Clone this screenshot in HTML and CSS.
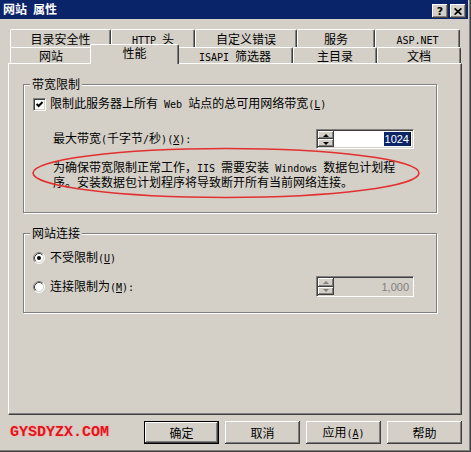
FILE: index.html
```html
<!DOCTYPE html>
<html lang="zh-CN">
<head>
    <meta charset="UTF-8">
    <title>网站 属性</title>
    <link rel="stylesheet" href="styles.css">
</head>
<body>
<div class="window">
    <!--标题栏-->
    <div class="titlebar">
        <span class="caption">网站<span class="en"> </span>属性</span>
        <span class="cap-btn">?</span>
        <span class="cap-btn">
            <svg width="8" height="7" viewBox="0 0 8 7"><path d="M0.6 0.4L7.4 6.6M7.4 0.4L0.6 6.6" stroke="#000" stroke-width="1.7"/></svg>
        </span>
    </div>

    <!--选项卡-->
    <div class="tabs">
        <div class="tab-row">
            <div class="tab w101">目录安全性</div>
            <div class="tab w84"><span class="en">HTTP </span>头</div>
            <div class="tab w102">自定义错误</div>
            <div class="tab w78">服务</div>
            <div class="tab w85"><span class="en">ASP.NET</span></div>
        </div>
        <div class="tab-row front">
            <div class="tab w82">网站</div>
            <div class="tab w89 current">性能</div>
            <div class="tab w116"><span class="en">ISAPI </span>筛选器</div>
            <div class="tab w84">主目录</div>
            <div class="tab w84">文档</div>
        </div>
    </div>

    <!--性能页-->
    <div class="panel">
        <div class="group bandwidth">
            <div class="legend">带宽限制</div>
            <div class="option">
                <span class="check">
                    <svg width="7" height="7" viewBox="0 0 7 7"><polyline points="0.6,3 2.6,5 6.6,1" fill="none" stroke="#000" stroke-width="2"/></svg>
                </span>
                <span>限制此服务器上所有<span class="en"> Web </span>站点的总可用网络带宽<span class="en">(<u>L</u>)</span></span>
            </div>
            <div class="field-row">
                <span>最大带宽<span class="en">(</span>千字节<span class="en">/</span>秒<span class="en">)(<u>X</u>):</span></span>
                <div class="spin">
                    <div class="spin-btns">
                        <span class="spin-btn up"></span>
                        <span class="spin-btn down"></span>
                    </div>
                    <div class="spin-field"><span class="sel">1024</span></div>
                </div>
            </div>
            <div class="note">
                <div>为确保带宽限制正常工作，<span class="en">IIS </span>需要安装<span class="en"> Windows </span>数据包计划程</div>
                <div>序。安装数据包计划程序将导致断开所有当前网络连接。</div>
            </div>
        </div>

        <div class="group connect">
            <div class="legend">网站连接</div>
            <div class="option radio-row">
                <svg class="radio" width="12" height="12" viewBox="0 0 12 12">
                    <circle cx="6" cy="6" r="5" fill="#fff"/>
                    <path d="M2.11 9.89A5.5 5.5 0 0 1 9.89 2.11" fill="none" stroke="#808080"/>
                    <path d="M9.89 2.11A5.5 5.5 0 0 1 2.11 9.89" fill="none" stroke="#fff"/>
                    <path d="M2.82 9.18A4.5 4.5 0 0 1 9.18 2.82" fill="none" stroke="#404040"/>
                    <path d="M9.18 2.82A4.5 4.5 0 0 1 2.82 9.18" fill="none" stroke="#d4d0c8"/>
                    <circle cx="6" cy="6" r="2" fill="#000"/>
                </svg>
                <span>不受限制<span class="en">(<u>U</u>)</span></span>
            </div>
            <div class="option radio-row limit">
                <svg class="radio" width="12" height="12" viewBox="0 0 12 12">
                    <circle cx="6" cy="6" r="5" fill="#fff"/>
                    <path d="M2.11 9.89A5.5 5.5 0 0 1 9.89 2.11" fill="none" stroke="#808080"/>
                    <path d="M9.89 2.11A5.5 5.5 0 0 1 2.11 9.89" fill="none" stroke="#fff"/>
                    <path d="M2.82 9.18A4.5 4.5 0 0 1 9.18 2.82" fill="none" stroke="#404040"/>
                    <path d="M9.18 2.82A4.5 4.5 0 0 1 2.82 9.18" fill="none" stroke="#d4d0c8"/>
                </svg>
                <span>连接限制为<span class="en">(<u>M</u>):</span></span>
                <div class="spin off">
                    <div class="spin-btns">
                        <span class="spin-btn up"></span>
                        <span class="spin-btn down"></span>
                    </div>
                    <div class="spin-field">1,000</div>
                </div>
            </div>
        </div>
    </div>

    <!--底部按钮-->
    <div class="footer">
        <span class="watermark">GYSDYZX.COM</span>
        <div class="buttons">
            <button class="btn default">确定</button>
            <button class="btn">取消</button>
            <button class="btn">应用<span class="en">(<u>A</u>)</span></button>
            <button class="btn">帮助</button>
        </div>
    </div>

    <!--红色圈注-->
    <svg class="mark" width="392" height="54" viewBox="0 0 392 54">
        <ellipse cx="196" cy="27" rx="193" ry="24.5" fill="none" stroke="#e3302f" stroke-width="1.6"/>
    </svg>
</div>
</body>
</html>
```

FILE: styles.css
```css
body{
    margin:0;
    font-family:"Noto Sans CJK SC","Noto Sans",sans-serif;
    font-size:12px;
    line-height:14px;
    color:#000;
    background:#d4d0c8;
}
.en{
    font-family:"DejaVu Sans Mono",monospace;
    font-size:10px;
    white-space:pre;
}
.window{
    position:relative;
    width:471px;
    height:452px;
    box-sizing:border-box;
    padding:0 2px 2px 0;
    border-right:1px solid #404040;
    border-bottom:1px solid #404040;
    box-shadow:inset -1px -1px #808080;
    background:#d4d0c8;
}

/*标题栏*/
.titlebar{
    display:flex;
    align-items:flex-end;
    height:19px;
    box-sizing:border-box;
    padding:0 2px 1px 3px;
    background:#0a246a;
    color:#fff;
}
.caption{
    flex:1;
    font-weight:bold;
}
.cap-btn{
    display:flex;
    align-items:center;
    justify-content:center;
    width:16px;
    height:14px;
    margin-left:2px;
    background:#d4d0c8;
    color:#000;
    font:bold 11px "DejaVu Sans",sans-serif;
    box-shadow:inset -1px -1px #404040, inset 1px 1px #fff, inset -2px -2px #808080;
}

/*选项卡*/
.tabs{
    margin:10px 0 0 10px;
}
.tab-row{
    display:flex;
}
.tab{
    box-sizing:border-box;
    height:18px;
    line-height:17px;
    text-align:center;
    white-space:nowrap;
    background:#d4d0c8;
    border-top:1px solid #fff;
    border-left:1px solid #fff;
    border-right:1px solid #404040;
    border-radius:2px 2px 0 0;
    box-shadow:inset -1px 0 #808080;
}
.front .tab{
    height:16px;
    line-height:15px;
}
.front .tab.current{
    position:relative;
    height:20px;
    margin:-3px -2px -1px;
}
.w78{width:78px;}
.w82{width:82px;}
.w84{width:84px;}
.w85{width:85px;}
.w89{width:89px;}
.w101{width:101px;}
.w102{width:102px;}
.w116{width:116px;}

/*内容面板*/
.panel{
    width:454px;
    height:352px;
    box-sizing:border-box;
    margin-left:8px;
    padding:20px 0 0 14px;
    border-top:1px solid #fff;
    border-left:1px solid #fff;
    border-right:1px solid #404040;
    border-bottom:1px solid #404040;
    box-shadow:inset -1px -1px #808080;
}
.group{
    width:414px;
    box-sizing:border-box;
    border:1px solid #808080;
    box-shadow:1px 1px #fff, inset 1px 1px #fff;
}
.bandwidth{
    height:129px;
}
.connect{
    height:80px;
    margin-top:20px;
}
.legend{
    width:fit-content;
    margin:-8px 0 0 6px;
    padding:0 2px;
    background:#d4d0c8;
}
.option{
    display:flex;
    align-items:center;
    gap:4px;
    height:14px;
    margin-top:6px;
    padding-left:9px;
    white-space:nowrap;
}
.radio-row{
    gap:5px;
    margin-top:11px;
}
.radio-row.limit{
    height:21px;
}
.check{
    display:flex;
    align-items:center;
    justify-content:center;
    width:13px;
    height:13px;
    box-sizing:border-box;
    border:1px solid;
    border-color:#808080 #fff #fff #808080;
    box-shadow:inset 1px 1px #404040, inset -1px -1px #d4d0c8;
    background:#fff;
}
.field-row{
    display:flex;
    align-items:center;
    margin-top:18px;
    padding-left:29px;
    white-space:nowrap;
}
.note{
    margin-top:11px;
    padding-left:29px;
    line-height:13px;
    white-space:nowrap;
}

/*微调框*/
.spin{
    display:flex;
    width:98px;
    height:20px;
    box-sizing:border-box;
    margin-left:auto;
    margin-right:22px;
    padding:1px;
    border:1px solid;
    border-color:#808080 #fff #fff #808080;
    box-shadow:inset 1px 1px #404040, inset -1px -1px #d4d0c8;
    background:#fff;
}
.limit .spin{
    height:21px;
}
.spin-btns{
    display:flex;
    flex-direction:column;
    width:16px;
}
.spin-btn{
    flex:1;
    display:flex;
    align-items:center;
    justify-content:center;
    background:#d4d0c8;
    box-shadow:inset -1px -1px #404040, inset 1px 1px #fff, inset -2px -2px #808080;
}
.spin-btn::after{
    content:"";
    border-left:3px solid transparent;
    border-right:3px solid transparent;
}
.spin-btn.up::after{
    border-bottom:3px solid #000;
}
.spin-btn.down::after{
    border-top:3px solid #000;
}
.spin-field{
    flex:1;
    display:flex;
    align-items:center;
    justify-content:flex-end;
    padding-right:1px;
    font:11px "Liberation Sans",sans-serif;
}
.sel{
    padding:0 1px;
    line-height:14px;
    background:#0a246a;
    color:#fff;
    border-right:1px solid #000;
}
.spin.off{
    background:#d4d0c8;
}
.spin.off .spin-field{
    color:#808080;
    padding-right:3px;
}
.spin.off .spin-btn.up::after{
    border-bottom-color:#808080;
}
.spin.off .spin-btn.down::after{
    border-top-color:#808080;
}

/*底部*/
.footer{
    display:flex;
    align-items:center;
    width:454px;
    margin:6px 0 0 8px;
}
.watermark{
    margin-left:2px;
    font:bold 15px "Liberation Mono",monospace;
    color:#e3141b;
    text-shadow:0 0 2px #ff9c9c;
}
.buttons{
    display:flex;
    gap:6px;
    margin-left:auto;
}
.btn{
    width:75px;
    height:23px;
    box-sizing:border-box;
    padding:0;
    border:0;
    background:#d4d0c8;
    color:#000;
    font:inherit;
    box-shadow:inset -1px -1px #404040, inset 1px 1px #fff, inset -2px -2px #808080;
}
.btn.default{
    border:1px solid #000;
}

/*红色圈注*/
.mark{
    position:absolute;
    left:30px;
    top:146px;
    pointer-events:none;
}
```
